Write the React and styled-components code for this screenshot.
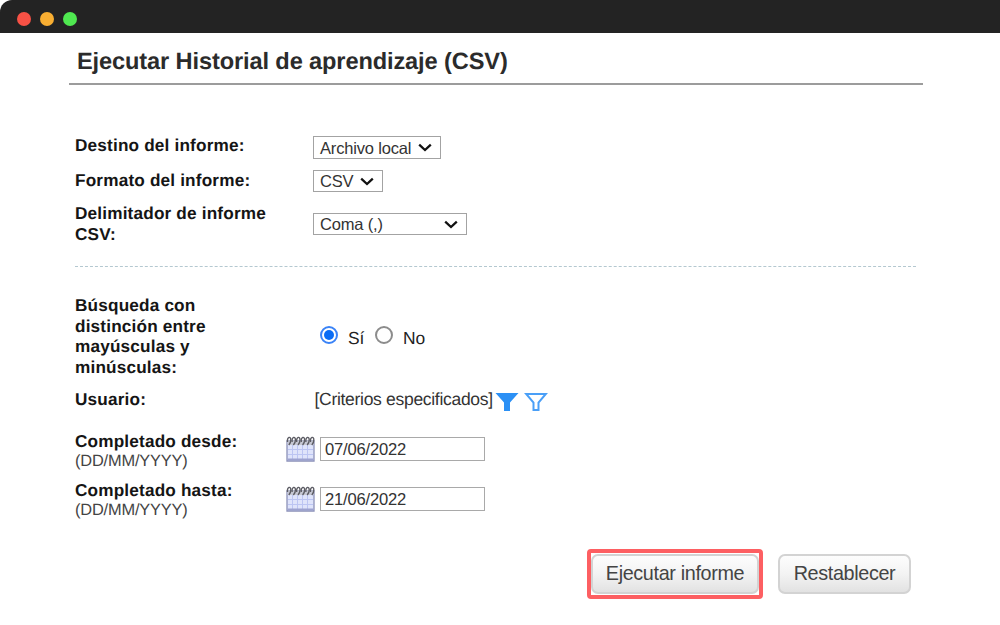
import React from "react";
import styled, { createGlobalStyle } from "styled-components";

const GlobalStyle = createGlobalStyle`
  *, *::before, *::after { box-sizing: border-box; }
  body {
    margin: 0;
    background: #fff;
    color: #222;
    font-family: "Liberation Sans", Arial, sans-serif;
    text-rendering: geometricPrecision;
  }
`;

const Window = styled.div`
  width: 1000px;
  height: 625px;
  overflow: hidden;
  background: #fff;
`;

const TitleBar = styled.div`
  display: flex;
  align-items: center;
  gap: 9px;
  height: 33px;
  padding: 5px 0 0 17px;
  background: #232323;
  border-radius: 12px 0 0 0;
`;

const Dot = styled.span`
  width: 14px;
  height: 14px;
  border-radius: 50%;
  background: ${(p) => p.$color};
`;

const Heading = styled.h1`
  width: 854px;
  height: 52px;
  margin: 0 0 0 69px;
  padding: 16px 0 0 8px;
  border-bottom: 2px solid #9c9c9c;
  font-size: 23.6px;
  line-height: 27px;
  font-weight: 700;
  letter-spacing: -0.12px;
  color: #2b2b2b;
  white-space: nowrap;
`;

const Section = styled.section`
  width: 841px;
  margin-left: 75px;
  padding-top: ${(p) => p.$top}px;
`;

const Divider = styled.hr`
  width: 841px;
  height: 0;
  margin: 0 0 0 75px;
  border: 0;
  border-top: 1px dashed #b4c8d0;
`;

const Row = styled.div`
  display: flex;
  align-items: flex-start;
  height: ${(p) => p.$height}px;
`;

const Label = styled.div`
  flex: none;
  width: ${(p) => p.$width || 238}px;
  margin-top: -1px;
  font-size: 17.2px;
  line-height: 20.5px;
  font-weight: 700;
  letter-spacing: 0.17px;
  color: #151515;
  white-space: pre-line;
`;

const Hint = styled.div`
  font-size: 16.4px;
  line-height: 18px;
  font-weight: 400;
  letter-spacing: -0.18px;
  color: #444;
`;

const Select = styled.button`
  display: flex;
  align-items: center;
  justify-content: space-between;
  width: ${(p) => p.$width}px;
  height: ${(p) => p.$height || 23}px;
  margin: ${(p) => p.$top}px 0 0;
  padding: 0 8px 0 6px;
  border: 1px solid #a3a3a3;
  background: #fff;
  font: 16.5px/20px "Liberation Sans", Arial, sans-serif;
  letter-spacing: -0.18px;
  color: #333;
`;

const RadioGroup = styled.div`
  display: flex;
  align-items: center;
  margin: 28px 0 0 7px;
`;

const Radio = styled.span`
  display: grid;
  place-items: center;
  width: 18px;
  height: 18px;
  margin-bottom: 2px;
  border: 2px solid ${(p) => (p.$on ? "#3a83f7" : "#8c8c8c")};
  border-radius: 50%;

  &::after {
    content: "";
    width: 10px;
    height: 10px;
    border-radius: 50%;
    background: ${(p) => (p.$on ? "#0a6cf5" : "transparent")};
  }
`;

const RadioText = styled.span`
  margin: 4px ${(p) => p.$right || 0}px 0 10px;
  font-size: 17.4px;
  line-height: 20px;
  letter-spacing: -0.2px;
  color: #222;
`;

const Criteria = styled.div`
  display: flex;
  align-items: flex-start;
  margin-top: -1px;
  padding-left: 1.5px;
  font-size: 17.5px;
  line-height: 20px;
  letter-spacing: -0.3px;
  color: #333;

  svg { display: block; }
`;

const FilterIcons = styled.span`
  display: flex;
  gap: 5px;
  margin: 3px 0 0 2px;
`;

const DateField = styled.div`
  display: flex;
  align-items: flex-start;
  gap: 5px;
  padding-top: ${(p) => p.$top || 4}px;
`;

const DateInput = styled.input`
  width: 165px;
  height: 24px;
  margin: 1px 0 0;
  padding: 1px 4px 0;
  border: 1px solid #a9a9a9;
  border-radius: 0;
  background: #fff;
  font: 16.6px/20px "Liberation Sans", Arial, sans-serif;
  letter-spacing: -0.2px;
  color: #333;
`;

const Actions = styled.div`
  display: flex;
  align-items: center;
  gap: 15px;
  margin: 16px 0 0 587px;
`;

const Highlight = styled.div`
  width: 176px;
  height: 50px;
  padding: 1px 0 0;
  border: 4px solid #fd5f62;
  border-radius: 4px;
`;

const Button = styled.button`
  display: block;
  width: ${(p) => p.$width}px;
  height: 40px;
  margin: 0;
  padding: 0 0 2px;
  border: 2px solid #d3d3d3;
  border-radius: 7px;
  background: linear-gradient(#fdfdfd, #f3f3f3 50%, #e2e2e2);
  font: 19.8px/22px "Liberation Sans", Arial, sans-serif;
  letter-spacing: -0.35px;
  color: #444;
  white-space: nowrap;
`;

const Chevron = () => (
  <svg width="14" height="9" viewBox="0 0 14 9" fill="none">
    <path d="M1.2 1.700 7 7l5.800-5.300" stroke="#111" strokeWidth="2.300" />
  </svg>
);

const Funnel = ({ filled }) => (
  <svg width="24" height="20" viewBox="0 0 24 20">
    {filled ? (
      <path d="M.5 1h23L15 10.500V19H9v-8.500Z" fill="#2b90f5" />
    ) : (
      <path d="M2.200 2h19.600L14.500 10.500V18h-5v-7.500Z" fill="#fff" stroke="#4a9ff7" strokeWidth="2" />
    )}
  </svg>
);

const Calendar = () => (
  <svg width="29" height="26" viewBox="0 0 29 26">
    <path d="M1 5h27v20H1z" fill="#dfe4fb" stroke="#8c91b8" strokeWidth="1.300" />
    <path d="M1.500 4.500h26V9h-26z" fill="#c6c8d4" />
    <path d="M2 13.500h25M2 18.500h25M6.500 9v15M11.500 9v15M16.500 9v15M21.500 9v15" stroke="#bcc5f3" />
    <path d="M1.500 23.500h26" stroke="#9da3d0" strokeWidth="2" />
    {[3, 7.6, 12.2, 16.8, 21.4, 26].map((x) => (
      <path
        key={x}
        d={`M${x - 1.5} 6c-.5-5.500 3.500-6 3.300-2 0 2.500-1 4-2 5`}
        fill="none"
        stroke="#5c5c64"
        strokeWidth="1.400"
      />
    ))}
  </svg>
);

export default function App() {
  return (
    <Window>
      <GlobalStyle />
      <TitleBar>
        <Dot $color="#f75145" />
        <Dot $color="#f8ae32" />
        <Dot $color="#4fe850" />
      </TitleBar>
      <Heading>Ejecutar Historial de aprendizaje (CSV)</Heading>

      <Section $top={51}>
        <Row $height={35}>
          <Label>Destino del informe:</Label>
          <Select $width={128} $top={0}>Archivo local<Chevron /></Select>
        </Row>
        <Row $height={33}>
          <Label>Formato del informe:</Label>
          <Select $width={70} $top={-1} $height={22}>CSV<Chevron /></Select>
        </Row>
        <Row $height={62}>
          <Label>{"Delimitador de informe\nCSV:"}</Label>
          <Select $width={154} $top={9} $height={22}>Coma (,)<Chevron /></Select>
        </Row>
      </Section>

      <Divider />

      <Section $top={29}>
        <Row $height={94}>
          <Label>{"Búsqueda con\ndistinción entre\nmayúsculas y\nminúsculas:"}</Label>
          <RadioGroup>
            <Radio $on />
            <RadioText $right={11}>Sí</RadioText>
            <Radio />
            <RadioText>No</RadioText>
          </RadioGroup>
        </Row>
        <Row $height={42}>
          <Label>Usuario:</Label>
          <Criteria>
            [Criterios especificados]
            <FilterIcons>
              <Funnel filled />
              <Funnel />
            </FilterIcons>
          </Criteria>
        </Row>
        <Row $height={49}>
          <Label $width={211}>
            Completado desde:
            <Hint>(DD/MM/YYYY)</Hint>
          </Label>
          <DateField>
            <Calendar />
            <DateInput defaultValue="07/06/2022" />
          </DateField>
        </Row>
        <Row $height={52}>
          <Label $width={211}>
            Completado hasta:
            <Hint>(DD/MM/YYYY)</Hint>
          </Label>
          <DateField $top={5}>
            <Calendar />
            <DateInput defaultValue="21/06/2022" />
          </DateField>
        </Row>
      </Section>

      <Actions>
        <Highlight>
          <Button $width={168}>Ejecutar informe</Button>
        </Highlight>
        <Button $width={133}>Restablecer</Button>
      </Actions>
    </Window>
  );
}
